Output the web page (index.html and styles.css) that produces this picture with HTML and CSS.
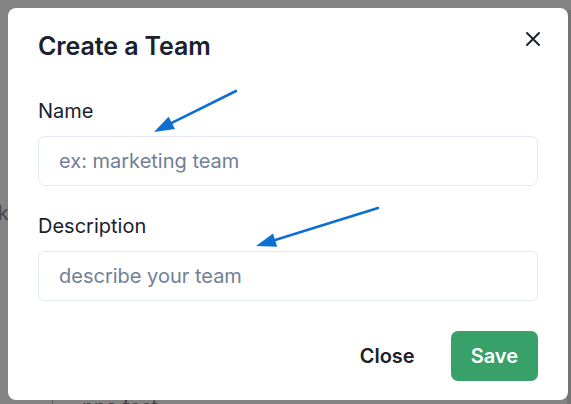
FILE: index.html
```html
<!DOCTYPE html>
<html lang="en">
<head>
<meta charset="utf-8">
<title>Create a Team</title>
<link rel="stylesheet" href="styles.css">
</head>
<body>
  <div class="page">
    <div class="page-side">Desk</div>
    <div class="page-row">
      <span class="page-rule"></span>
      <span class="page-text">nna fest</span>
    </div>
  </div>
  <div class="scrollbar"></div>

  <section class="modal" role="dialog" aria-labelledby="modal-title">
    <header class="modal-header">
      <h2 id="modal-title" class="modal-title">Create a Team</h2>
    </header>
    <button class="close-btn" aria-label="Close">
      <svg class="close-icon" viewBox="0 0 16 16" width="16" height="16" aria-hidden="true">
        <path d="M2 2 L14 14 M14 2 L2 14" stroke="#1a202c" stroke-width="1.9" stroke-linecap="round" fill="none"/>
      </svg>
    </button>
    <div class="modal-body">
      <div class="field">
        <label class="field-label" for="team-name">Name</label>
        <input class="field-input" id="team-name" type="text" placeholder="ex: marketing team">
      </div>
      <div class="field field-second">
        <label class="field-label" for="team-desc">Description</label>
        <input class="field-input" id="team-desc" type="text" placeholder="describe your team">
      </div>
    </div>
    <footer class="modal-footer">
      <button class="btn btn-ghost">Close</button>
      <button class="btn btn-save">Save</button>
    </footer>
  </section>

  <svg class="annotations" width="571" height="404" viewBox="0 0 571 404" aria-hidden="true">
    <line x1="236" y1="91" x2="171.8" y2="122.9" stroke="#0d6fd1" stroke-width="2.6" stroke-linecap="round"/>
    <polygon points="154,132 175.0,129.1 168.6,116.7" fill="#0d6fd1"/>
    <line x1="378" y1="208" x2="275.1" y2="240.1" stroke="#0d6fd1" stroke-width="2.6" stroke-linecap="round"/>
    <polygon points="256,246 277.2,246.8 273.0,233.4" fill="#0d6fd1"/>
  </svg>
</body>
</html>
```

FILE: styles.css
```css
* { box-sizing: border-box; }

html, body {
  margin: 0;
  padding: 0;
  width: 571px;
  height: 404px;
  overflow: hidden;
}

body {
  background: #838383;
  font-family: Inter, "Noto Sans", "Liberation Sans", sans-serif;
  position: relative;
}

.page {
  display: flex;
  flex-direction: column;
  height: 404px;
}

.page-side {
  margin-top: 198px;
  margin-left: -39px;
  font-size: 20px;
  line-height: 30px;
  color: #474747;
}

.page-row {
  display: flex;
  align-items: flex-start;
  margin-top: auto;
  height: 4px;
  overflow: visible;
  padding-left: 52px;
}

.page-rule {
  width: 1px;
  height: 20px;
  background: #5e5e5e;
}

.page-text {
  margin-left: 29px;
  margin-top: -3px;
  font-size: 20px;
  line-height: 20px;
  color: #404040;
}

.scrollbar {
  position: absolute;
  top: 10px;
  right: 0;
  width: 4px;
  height: 394px;
  background: #737373;
}

.modal {
  position: absolute;
  top: 8px;
  left: 8px;
  width: 560px;
  height: 392px;
  background: #ffffff;
  border-radius: 8px;
  display: flex;
  flex-direction: column;
}

.modal-header {
  padding: 23px 30px 0;
}

.modal-title {
  margin: 0;
  font-size: 25px;
  line-height: 30px;
  font-weight: 600;
  color: #1a202c;
  letter-spacing: -0.1px;
}

.close-btn {
  position: absolute;
  top: 11px;
  right: 15px;
  width: 40px;
  height: 40px;
  border: 0;
  padding: 0;
  background: transparent;
  display: flex;
  align-items: center;
  justify-content: center;
}

.close-icon {
  width: 16px;
  height: 16px;
}

.modal-body {
  padding: 35px 30px 0;
  display: flex;
  flex-direction: column;
}

.field {
  display: flex;
  flex-direction: column;
}

.field-second {
  margin-top: 25px;
}

.field-label {
  font-size: 20px;
  line-height: 30px;
  font-weight: 400;
  color: #1a202c;
  margin-bottom: 10px;
}

.field-input {
  width: 500px;
  height: 50px;
  border: 1px solid #e2e8f0;
  border-radius: 7px;
  padding: 0 20px;
  font-family: Inter, "Noto Sans", "Liberation Sans", sans-serif;
  font-size: 20px;
  color: #1a202c;
  background: #ffffff;
  outline: none;
}

.field-input::placeholder {
  color: #718096;
  opacity: 1;
}

.modal-footer {
  display: flex;
  justify-content: flex-end;
  gap: 16px;
  padding: 30px 30px 0;
}

.btn {
  height: 50px;
  padding: 0 20px;
  border: 0;
  border-radius: 7px;
  font-family: Inter, "Noto Sans", "Liberation Sans", sans-serif;
  font-size: 20px;
  font-weight: 600;
  line-height: 1.2;
}

.btn-ghost {
  background: transparent;
  color: #1a202c;
}

.btn-save {
  background: #38a169;
  color: #ffffff;
}

.annotations {
  position: absolute;
  top: 0;
  left: 0;
  pointer-events: none;
}
```
